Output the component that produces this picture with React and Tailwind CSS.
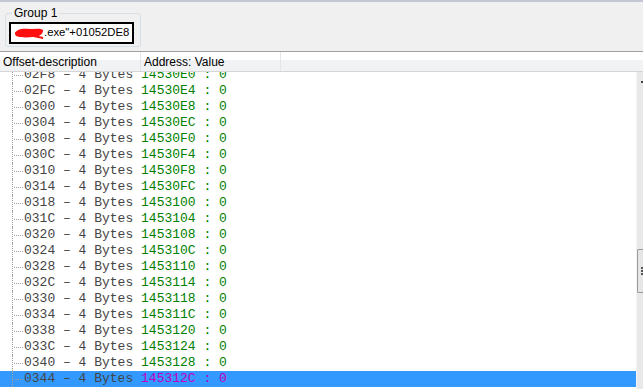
import React from "react";

const rows = [];
for (let off = 0x2f8; off <= 0x344; off += 4) {
	rows.push({
		off: off.toString(16).toUpperCase().padStart(4, "0"),
		addr: (0x14530e0 + (off - 0x2f8)).toString(16).toUpperCase(),
	});
}

const Redacted = () => (
	<svg width="30" height="12" viewBox="0 0 34 12" preserveAspectRatio="none" className="shrink-0">
		<path
			d="M1 6 C3 2, 10 1, 18 2 C24 2, 30 1, 33 3 C33 6, 31 8, 28 9 C22 10, 14 11, 8 10 C4 10, 1 9, 1 6 Z"
			fill="#ff1010"
		/>
		<path d="M22 9 L33 11" stroke="#ff1010" strokeWidth="2" />
	</svg>
);

const Row = ({ off, addr, selected }) => (
	<div
		className={`h-4 flex items-center shrink-0 ${selected ? "bg-[#3399ff]" : ""}`}
	>
		<div className="w-[12px] self-stretch" />
		<div className="self-stretch w-[12px] border-l border-dotted border-[#a0a0a0] flex items-center">
			<div className="w-[9px] ml-[1px] border-t border-dotted border-[#a0a0a0]" />
		</div>
		<span className="whitespace-pre text-[#444444]">{`${off} – 4 Bytes `}</span>
		<span
			className={`whitespace-pre ${selected ? "text-[#c000c0]" : "text-[#008000]"}`}
		>{`${addr} : 0`}</span>
	</div>
);

const App = () => {
	return (
		<div className="w-[643px] h-[389px] overflow-hidden bg-[#f0f0f0] border-t-2 border-[#c3c6d4] flex flex-col font-['Liberation_Sans',Arial,sans-serif] text-[12px]">
			{/* group area */}
			<div className="h-[49px] shrink-0 pl-[5px] pt-[11px]">
				<div className="relative w-[136px] h-[34px] rounded-[3px] border border-[#d5dfe5]">
					<span className="absolute left-[6px] top-[-10px] px-[2px] bg-[#f0f0f0] text-black leading-[18px]">
						Group 1
					</span>
					<div className="ml-[3px] mt-[8px] w-[125px] h-[22px] border-2 border-black bg-white flex items-center pl-[3px] text-black overflow-hidden">
						<Redacted />
						<span className="leading-none text-[11.3px] whitespace-nowrap">.exe"+01052DE8</span>
					</div>
				</div>
			</div>

			{/* list view */}
			<div className="flex-1 flex flex-col border-t border-[#a0a0a0] bg-white min-h-0">
				<div className="h-[20px] shrink-0 flex border-b border-[#d5d5d5] bg-[linear-gradient(#ffffff_0%,#ffffff_40%,#f1f2f4_45%,#f1f2f4_100%)] text-black">
					<div className="w-[141px] pl-[3px] flex items-center border-r border-[#e4e5e7]">
						Offset-description
					</div>
					<div className="w-[140px] pl-[3px] flex items-center border-r border-[#e4e5e7]">
						Address: Value
					</div>
					<div className="flex-1" />
				</div>

				<div className="flex-1 flex min-h-0">
					<div className="flex-1 overflow-hidden font-['Liberation_Mono',monospace] text-[13px] leading-4">
						<div className="-mt-[5px] flex flex-col">
							{rows.map((r, i) => (
								<Row
									key={r.off}
									off={r.off}
									addr={r.addr}
									selected={i === rows.length - 1}
								/>
							))}
						</div>
					</div>
					<div className="w-[7px] shrink-0 bg-[#e9e9e9] border-l border-[#f4f4f4] relative">
						<div className="absolute left-[4px] top-[9px] w-[3px] h-[2px] bg-[#444]" />
						<div className="absolute left-0 top-[177px] w-[7px] h-[44px] border border-r-0 border-[#9a9a9a] rounded-l-[2px] bg-[#e6e6e6] flex flex-col justify-center items-end gap-[1px]">
							<div className="w-[3px] h-[2px] bg-[#555]" />
							<div className="w-[3px] h-[2px] bg-[#555]" />
							<div className="w-[3px] h-[2px] bg-[#555]" />
						</div>
					</div>
				</div>
			</div>
		</div>
	);
};

export default App;
